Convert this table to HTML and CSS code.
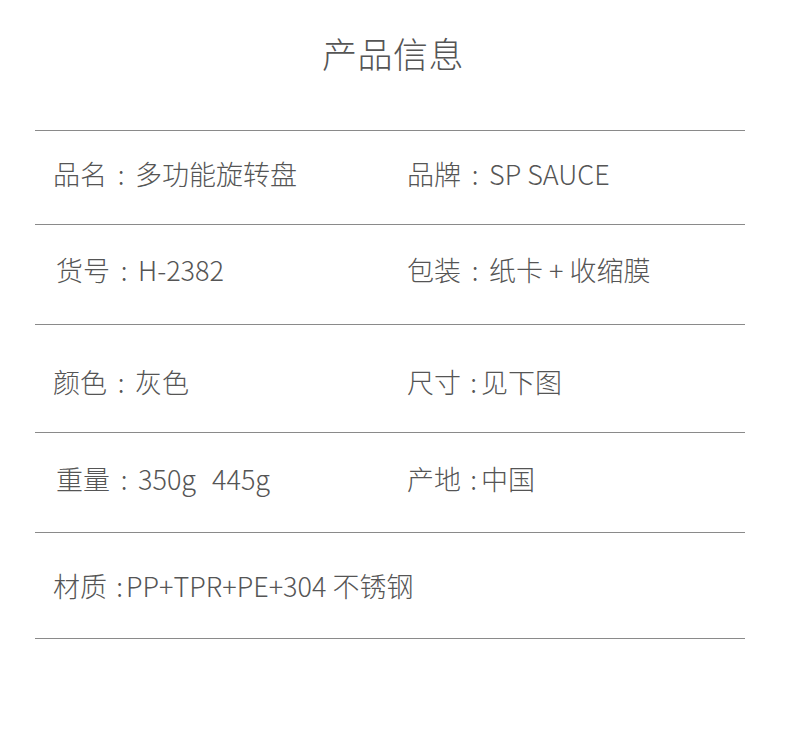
FILE: index.html
```html
<!DOCTYPE html>
<html lang="zh-CN">
<head>
    <meta charset="UTF-8">
    <title>产品信息</title>
    <link rel="stylesheet" href="styles.css">
</head>
<body>

    <div class="page">
        <h1 class="title">产品信息</h1>

        <div class="spec-table">
            <div class="spec-row row-1">
                <div class="cell">品名<span class="colon">:</span>多功能旋转盘</div>
                <div class="cell">品牌<span class="colon">:</span>SP SAUCE</div>
            </div>
            <div class="spec-row row-2">
                <div class="cell nudge">货号<span class="colon">:</span>H-2382</div>
                <div class="cell">包装<span class="colon">:</span>纸卡 + 收缩膜</div>
            </div>
            <div class="spec-row row-3">
                <div class="cell">颜色<span class="colon">:</span>灰色</div>
                <div class="cell">尺寸<span class="colon narrow">:</span>见下图</div>
            </div>
            <div class="spec-row row-4">
                <div class="cell nudge">重量<span class="colon">:</span>350g<span class="gap"></span>445g</div>
                <div class="cell">产地<span class="colon narrow">:</span>中国</div>
            </div>
            <div class="spec-row row-5">
                <div class="cell wide">材质<span class="colon tight">:</span>PP+TPR+PE+304 不锈钢</div>
            </div>
        </div>
    </div>

</body>
</html>
```

FILE: styles.css
```css
* {
    margin: 0;
    padding: 0;
    box-sizing: border-box;
}

body {
    font-family: "Noto Sans CJK SC", "Noto Sans", sans-serif;
    font-weight: 300;
    background: #fff;
    color: #555;
}

.page {
    width: 790px;
    height: 739px;
    padding: 0 45px 0 35px;
}

.title {
    height: 130px;
    padding-top: 27px;
    padding-left: 6px;
    font-size: 35px;
    font-weight: 300;
    line-height: 52px;
    text-align: center;
    color: #555;
    letter-spacing: 0.5px;
}

.spec-table {
    border-top: 1px solid #8a8a8a;
}

.spec-row {
    display: grid;
    grid-template-columns: 354px 1fr;
    align-items: center;
    border-bottom: 1px solid #8a8a8a;
    font-size: 27px;
    line-height: 40px;
}

.cell {
    padding-left: 18px;
}

.cell.nudge {
    padding-left: 21px;
}

.cell.wide {
    grid-column: 1 / 3;
}

/* colon sits centred in its own box */
.colon {
    display: inline-block;
    width: 28px;
    text-align: center;
}

.colon.narrow {
    width: 20px;
    text-align: right;
    padding-right: 4px;
}

.colon.tight {
    width: 19px;
    text-align: right;
    padding-right: 3px;
}

.gap {
    display: inline-block;
    width: 16px;
}

.row-1 { height: 94px; padding-bottom: 8px; }
.row-2 { height: 100px; padding-bottom: 10px; }
.row-3 { height: 108px; padding-top: 6px; }
.row-4 { height: 100px; padding-bottom: 8px; }
.row-5 { height: 106px; }
```
